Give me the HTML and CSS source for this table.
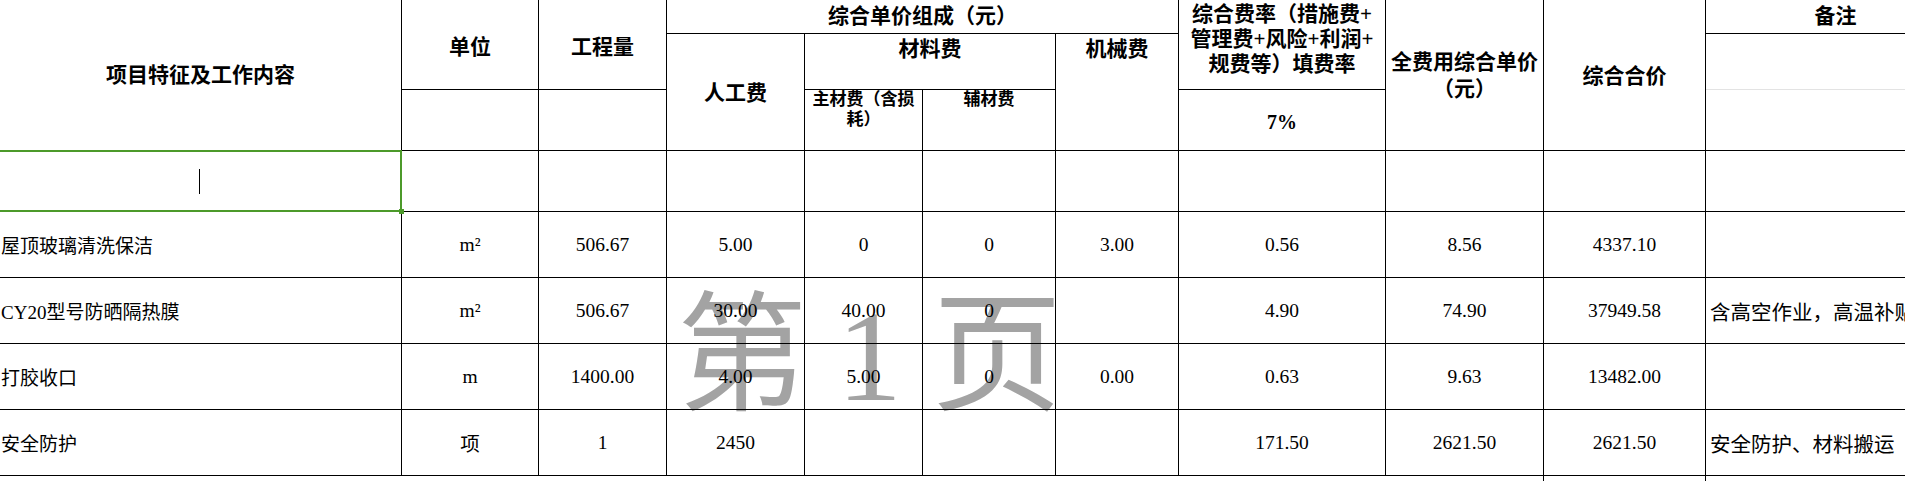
FILE: index.html
```
<!DOCTYPE html>
<html lang="zh-CN">
<head>
<meta charset="utf-8">
<title>综合单价分析</title>
<link rel="stylesheet" href="styles.css">
</head>
<body>
<div class="watermark"><span class="wm-cjk">第</span><span class="wm-num">1</span><span class="wm-cjk">页</span></div>
<div class="sheet">
  <!-- header row 1 -->
  <div class="c h span-r3 pt1">项目特征及工作内容</div>
  <div class="c h span-r2 pt5">单位</div>
  <div class="c h span-r2 pt5">工程量</div>
  <div class="c h span-c4">综合单价组成（元）</div>
  <div class="c h span-r2 top rate">综合费率（措施费+<br>管理费+风险+利润+<br>规费等）填费率</div>
  <div class="c h span-r3 lh27 pt2">全费用综合单价<br>（元）</div>
  <div class="c h span-r3 pt3">综合合价</div>
  <div class="c h">备注</div>
  <!-- header row 2 -->
  <div class="c h span-r2 pt2">人工费</div>
  <div class="c h span-c2 top pt3">材料费</div>
  <div class="c h span-r2 top pt3">机械费</div>
  <div class="c light"></div>
  <!-- header row 3 -->
  <div class="c"></div>
  <div class="c"></div>
  <div class="c h sub top">主材费（含损耗）</div>
  <div class="c h sub top">辅材费</div>
  <div class="c h pct pt4">7%</div>
  <div class="c"></div>
  <!-- row 4: selected empty row -->
  <div class="c sel"><span class="caret"></span></div>
  <div class="c"></div><div class="c"></div><div class="c"></div><div class="c"></div><div class="c"></div>
  <div class="c"></div><div class="c"></div><div class="c"></div><div class="c"></div><div class="c"></div>
  <!-- row 5 -->
  <div class="c name">屋顶玻璃清洗保洁</div>
  <div class="c num">m²</div>
  <div class="c num">506.67</div>
  <div class="c num">5.00</div>
  <div class="c num">0</div>
  <div class="c num">0</div>
  <div class="c num">3.00</div>
  <div class="c num">0.56</div>
  <div class="c num">8.56</div>
  <div class="c num">4337.10</div>
  <div class="c note"></div>
  <!-- row 6 -->
  <div class="c name">CY20型号防晒隔热膜</div>
  <div class="c num">m²</div>
  <div class="c num">506.67</div>
  <div class="c num">30.00</div>
  <div class="c num">40.00</div>
  <div class="c num">0</div>
  <div class="c num"></div>
  <div class="c num">4.90</div>
  <div class="c num">74.90</div>
  <div class="c num">37949.58</div>
  <div class="c note">含高空作业，高温补贴</div>
  <!-- row 7 -->
  <div class="c name">打胶收口</div>
  <div class="c num">m</div>
  <div class="c num">1400.00</div>
  <div class="c num">4.00</div>
  <div class="c num">5.00</div>
  <div class="c num">0</div>
  <div class="c num">0.00</div>
  <div class="c num">0.63</div>
  <div class="c num">9.63</div>
  <div class="c num">13482.00</div>
  <div class="c note"></div>
  <!-- row 8 -->
  <div class="c name">安全防护</div>
  <div class="c num">项</div>
  <div class="c num">1</div>
  <div class="c num">2450</div>
  <div class="c num"></div>
  <div class="c num"></div>
  <div class="c num"></div>
  <div class="c num">171.50</div>
  <div class="c num">2621.50</div>
  <div class="c num">2621.50</div>
  <div class="c note">安全防护、材料搬运</div>
  <!-- row 9 (only its top edge is visible) -->
  <div class="c tail span-c9"></div>
  <div class="c tail"></div>
  <div class="c tail"></div>
</div>
</body>
</html>
```
FILE: styles.css
```
html, body {
  margin: 0;
  padding: 0;
  background: #fff;
  overflow: hidden;
  width: 1905px;
  height: 481px;
}

body {
  position: relative;
  font-family: "Liberation Serif", "Noto Sans CJK SC", serif;
  color: #000;
}

.watermark {
  position: absolute;
  left: 677px;
  top: 278px;
  z-index: 0;
  display: flex;
  align-items: baseline;
  gap: 30px;
  font-family: "Noto Sans CJK SC", sans-serif;
  font-size: 130px;
  line-height: 130px;
  color: #a3a3a3;
  white-space: nowrap;
}

.wm-num {
  font-family: "Liberation Serif", serif;
}

.sheet {
  position: relative;
  z-index: 1;
  display: grid;
  grid-template-columns: 402px 137px 128px 138px 118px 133px 123px 207px 158px 162px 260px;
  grid-template-rows: 34px 56px 61px 61px 66px 66px 66px 66px 5px;
  width: 1966px;
}

.c {
  box-sizing: border-box;
  border-right: 1px solid #000;
  border-bottom: 1px solid #000;
  display: flex;
  align-items: center;
  justify-content: center;
  text-align: center;
  overflow: hidden;
}

.tail {
  border-bottom: none;
}

.span-r2 { grid-row: span 2; }
.span-r3 { grid-row: span 3; }
.span-c2 { grid-column: span 2; }
.span-c4 { grid-column: span 4; }
.span-c9 { grid-column: span 9; }

.h {
  font-weight: 700;
  font-size: 21px;
  line-height: 25px;
}

.top { align-items: flex-start; }
.pt1 { padding-top: 1px; }
.pt2 { padding-top: 2px; }
.pt3 { padding-top: 3px; }
.pt4 { padding-top: 4px; }
.pt5 { padding-top: 5px; }

.rate {
  padding-top: 2px;
}

.lh27 { line-height: 27px; }

.sub {
  font-size: 17px;
  line-height: 20px;
}

.pct {
  font-size: 20px;
}

.light {
  border-bottom-color: #e3e3e3;
}

.num {
  font-size: 19.5px;
}

.name {
  justify-content: flex-start;
  text-align: left;
  padding-left: 1px;
  font-size: 19px;
  white-space: nowrap;
}

.note {
  justify-content: flex-start;
  text-align: left;
  padding-left: 4px;
  font-size: 20.5px;
  white-space: nowrap;
}

.sel {
  position: relative;
  overflow: visible;
}

.sel::before {
  content: "";
  position: absolute;
  top: -1px;
  left: -2px;
  right: -1px;
  bottom: -1px;
  border: 2px solid #4c9a2a;
}

.sel::after {
  content: "";
  position: absolute;
  right: -3px;
  bottom: -3px;
  width: 5px;
  height: 5px;
  background: #4c9a2a;
}

.caret {
  display: block;
  width: 1px;
  height: 25px;
  background: #000;
  margin-right: 3px;
}
```
